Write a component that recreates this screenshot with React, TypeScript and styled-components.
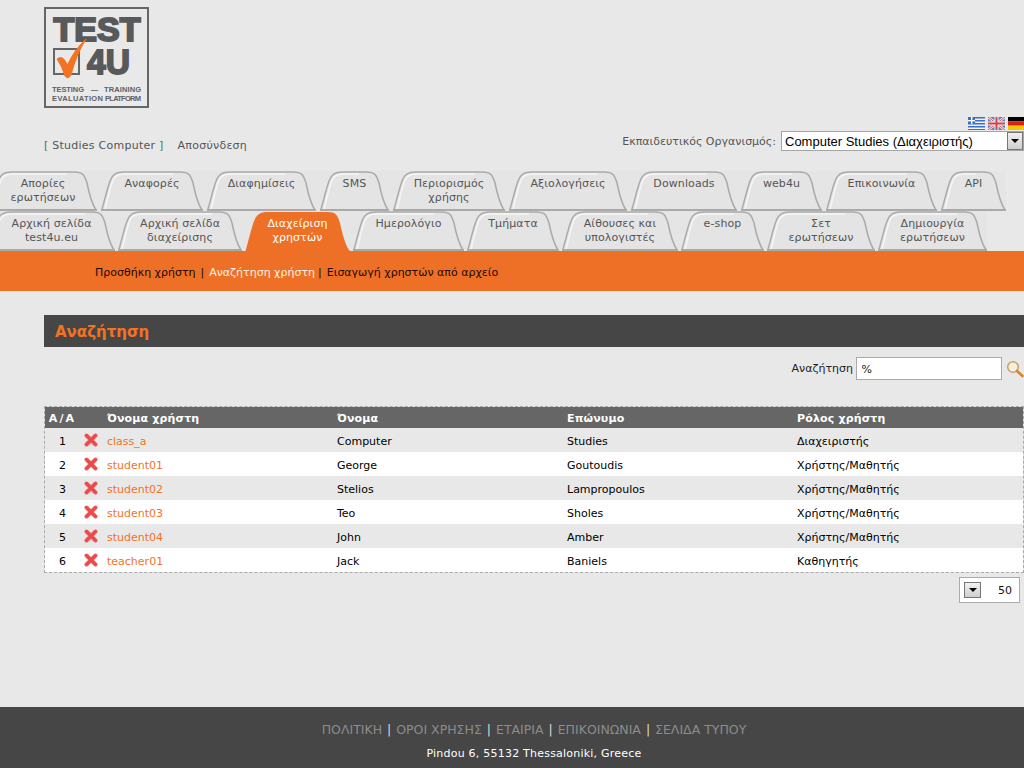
import React from "react";
import styled, { createGlobalStyle } from "styled-components";

const Global = createGlobalStyle`
  html, body { margin: 0; padding: 0; height: 768px; overflow: hidden; background: #e8e8e8; }
  body { font-family: "DejaVu Sans", Verdana, sans-serif; font-size: 11px; color: #555; }
  #root { height: 768px; }
`;

const Page = styled.div`
  height: 768px;
  display: flex;
  flex-direction: column;
  overflow: hidden;
`;
const LogoBox = styled.div`
  margin: 7px 0 0 44px;
  height: 101px;
  line-height: 0;
`;
const TopBar = styled.div`
  display: flex;
  justify-content: space-between;
  align-items: flex-end;
  padding-left: 44px;
  margin-top: 9px;
  margin-bottom: 20px;
`;
const UserBox = styled.div`
  display: flex;
  gap: 14px;
  line-height: 14px;
  color: #555;
  letter-spacing: 0.25px;
  margin-bottom: -2px;
`;
const Bracket = styled.span`
  color: #4a6a8a;
`;
const OrgBox = styled.div`
  display: flex;
  flex-direction: column;
  align-items: flex-end;
`;
const Flags = styled.div`
  display: flex;
  gap: 3px;
  height: 14px;
  line-height: 0;
`;
const OrgRow = styled.div`
  display: flex;
  align-items: center;
  gap: 5px;
  height: 20px;
`;
const FakeSelect = styled.div`
  width: 243px;
  height: 20px;
  box-sizing: border-box;
  border: 1px solid #a5a5a5;
  background: #fff;
  display: flex;
  align-items: center;
  justify-content: space-between;
  padding-left: 3px;
  font: 13px "Liberation Sans", Arial, sans-serif;
  color: #000;
`;
const ArrowButton = styled.div<{ $w: number; $h: number }>`
  width: ${(p) => p.$w}px;
  height: ${(p) => p.$h}px;
  box-sizing: border-box;
  border: 1px solid #777;
  background: linear-gradient(#f0f0f0, #cfcfcf);
  display: flex;
  align-items: center;
  justify-content: center;
  &::after {
    content: "";
    border-left: 4px solid transparent;
    border-right: 4px solid transparent;
    border-top: 4px solid #000;
  }
`;
const TabRow = styled.div<{ $left: number; $gap: number }>`
  display: flex;
  gap: ${(p) => p.$gap}px;
  margin-left: ${(p) => p.$left}px;
  height: 40px;
  width: fit-content;
  background: #e5e5e5;
`;
const TabBox = styled.div<{ $w: number; $active?: boolean }>`
  position: relative;
  width: ${(p) => p.$w}px;
  height: 40px;
  flex: none;
  box-sizing: border-box;
  padding-top: 6px;
  text-align: center;
  line-height: 14px;
  letter-spacing: 0.1px;
  color: ${(p) => (p.$active ? "#fff" : "#555")};
`;
const TabShape = styled.svg`
  position: absolute;
  left: 0;
  top: 0;
`;
const TabLabel = styled.span`
  position: relative;
  display: block;
  white-space: pre-line;
`;
const OrangeBar = styled.nav`
  height: 40px;
  box-sizing: border-box;
  padding: 3px 0 0 95px;
  background: #ee7026;
  display: flex;
  align-items: center;
  line-height: 14px;
  color: #1a0a00;
  white-space: pre;
`;
const NavActive = styled.span`
  color: #fff2e0;
  margin-right: -2px;
`;
const NavSep = styled.span`
  margin: 0 5px 0 5px;
`;
const Content = styled.main`
  margin: 24px 0 0 44px;
`;
const TitleBar = styled.h1`
  margin: 0;
  height: 32px;
  background: #464646;
  color: #f47321;
  font-size: 15px;
  font-weight: bold;
  line-height: 34px;
  padding-left: 11px;
`;
const SearchRow = styled.div`
  display: flex;
  justify-content: flex-end;
  align-items: center;
  margin-top: 10px;
  height: 23px;
  color: #222;
`;
const SearchLabel = styled.span`
  margin-right: 3px;
`;
const SearchInput = styled.div`
  width: 146px;
  height: 23px;
  box-sizing: border-box;
  border: 1px solid #aaa;
  background: #fff;
  color: #222;
  line-height: 23px;
  padding-left: 4.5px;
`;
const SearchIcon = styled.svg`
  margin-left: 4px;
  flex: none;
`;
const Table = styled.table`
  margin-top: 26px;
  width: 980px;
  box-sizing: border-box;
  table-layout: fixed;
  border-collapse: separate;
  border-spacing: 0;
  border: 1px dashed #aaa;
`;
const HeadCell = styled.th<{ $w?: number; $center?: boolean }>`
  width: ${(p) => (p.$w ? p.$w + "px" : "auto")};
  height: 21px;
  background: #666;
  color: #fff;
  font-size: 11px;
  font-weight: bold;
  letter-spacing: ${(p) => (p.$center ? 2.2 : 0.15)}px;
  text-align: ${(p) => (p.$center ? "center" : "left")};
  padding: 1px 0 0 ${(p) => (p.$center ? 0 : 4)}px;
  box-sizing: border-box;
`;
const Row = styled.tr<{ $odd: boolean }>`
  background: ${(p) => (p.$odd ? "#e8e8e8" : "#fff")};
`;
const Cell = styled.td<{ $center?: boolean }>`
  height: 24px;
  padding: 2px 0 0 ${(p) => (p.$center ? 0 : 4)}px;
  box-sizing: border-box;
  color: #000;
  text-align: ${(p) => (p.$center ? "center" : "left")};
`;
const UserLink = styled.span`
  color: #f47321;
`;
const DeleteIcon = styled.svg`
  display: block;
  margin: -2px 0 0 4px;
`;
const PagerRow = styled.div`
  display: flex;
  justify-content: flex-end;
  margin: 4px 4px 0 0;
`;
const Pager = styled.div`
  width: 61px;
  height: 26px;
  box-sizing: border-box;
  border: 1px solid #aaa;
  background: #fff;
  padding: 0 7px 0 4px;
  display: flex;
  align-items: center;
  justify-content: space-between;
  color: #111;
`;
const Footer = styled.footer`
  margin-top: auto;
  height: 61px;
  background: #464646;
  text-align: center;
  box-sizing: border-box;
  padding: 15px 0 0 44px;
  color: #fff;
`;
const FooterLinks = styled.div`
  font-size: 12.5px;
  line-height: 15px;
  white-space: pre;
`;
const FooterLink = styled.span`
  color: #8c8c8c;
`;
const FooterSep = styled.span`
  margin: 0 1px;
  color: #ddd;
`;
const Address = styled.div`
  margin-top: 9px;
  line-height: 15px;
  letter-spacing: 0.22px;
`;

const logoFont = "'Liberation Sans', sans-serif";
const Logo = () => (
  <svg width="105" height="101" viewBox="44 7 105 101">
    <rect x="45" y="8" width="103" height="99" fill="#e9e9e9" stroke="#666" strokeWidth="2" />
    <text x="53.5" y="40.5" fontFamily={logoFont} fontWeight="bold" fontSize="34" fill="#58595b" textLength="87" lengthAdjust="spacingAndGlyphs" stroke="#58595b" strokeWidth="2">TEST</text>
    <text x="87" y="73.5" fontFamily={logoFont} fontWeight="bold" fontSize="35" fill="#58595b" textLength="43" lengthAdjust="spacingAndGlyphs" stroke="#58595b" strokeWidth="1.8">4U</text>
    <rect x="54" y="49" width="25" height="25" fill="none" stroke="#666" strokeWidth="2" />
    <path d="M57 59 Q62 55 65.5 61.5 L67.5 65 Q74 50 86 39 Q76 55 71 75 Q68 80 65 76 Q62 66 57 59Z" fill="#f47321" stroke="#f47321" strokeWidth="1" strokeLinejoin="round" />
    <g fontFamily={logoFont} fontWeight="bold" fontSize="7.5" fill="#606163">
      <text x="52" y="91.5" textLength="32">TESTING</text>
      <text x="91" y="91.5" textLength="7" lengthAdjust="spacingAndGlyphs">—</text>
      <text x="104" y="91.5" textLength="37">TRAINING</text>
      <text x="52" y="100.5" textLength="51">EVALUATION</text>
      <text x="105" y="100.5" textLength="36">PLATFORM</text>
    </g>
  </svg>
);

const GreekFlag = () => (
  <svg width="17" height="13" viewBox="0 0 17 13">
    <rect width="17" height="13" fill="#3d6fc4" />
    {[1.5, 4.5, 7.5, 10.5].map((y) => (
      <rect key={y} x="0" y={y} width="17" height="1.5" fill="#eef2fa" />
    ))}
    <rect width="7" height="7" fill="#3d6fc4" />
    <rect x="3" width="1.4" height="7" fill="#fff" />
    <rect y="3" width="7" height="1.4" fill="#fff" />
  </svg>
);
const UkFlag = () => (
  <svg width="17" height="13" viewBox="0 0 17 13">
    <rect width="17" height="13" fill="#6f7fb5" />
    <path d="M0 0L17 13M17 0L0 13" stroke="#f2f2f2" strokeWidth="2.4" />
    <path d="M0 0L17 13M17 0L0 13" stroke="#cf5a6a" strokeWidth="1" />
    <path d="M8.5 0V13M0 6.5H17" stroke="#f2f2f2" strokeWidth="4" />
    <path d="M8.5 0V13M0 6.5H17" stroke="#d6404f" strokeWidth="2" />
  </svg>
);
const GermanFlag = () => (
  <svg width="16" height="13" viewBox="0 0 16 13">
    <rect width="16" height="4.4" fill="#000" />
    <rect y="4.4" width="16" height="4.3" fill="#d8201c" />
    <rect y="8.7" width="16" height="4.3" fill="#f7c600" />
  </svg>
);

const Tab = ({ w, label, active }: { w: number; label: string; active?: boolean }) => {
  const h = 40;
  const d = `M0.5 ${h} C3 ${h - 8} 6.5 ${h - 24} 9.5 ${h - 31} C12 3.5 15 1 23 1 L${w - 23} 1 C${w - 14} 1 ${w - 12.5} 4 ${w - 10} 12 C${w - 8} 22 ${w - 5} ${h - 7} ${w - 1} ${h - 1}`;
  const inner = `M4 ${h - 2} C6 ${h - 9} 9 ${h - 24} 12 ${h - 31} C14 5 17 3 23 3 L${w - 30} 3`;
  return (
    <TabBox $w={w} $active={active}>
      <TabShape width={w} height={h}>
        {active ? (
          <path d={`${d} L${w} ${h} Z`} fill="#ee7026" />
        ) : (
          <>
            <path d={`${d} L${w} ${h} Z`} fill="#e4e4e4" />
            <path d={inner} fill="none" stroke="#f6f6f6" strokeWidth="1.5" />
            <path d={d} fill="none" stroke="#aaa" strokeWidth="1.5" />
            <path d={`M0 ${h - 1} H${w}`} stroke="#aaa" strokeWidth="2" />
          </>
        )}
      </TabShape>
      <TabLabel>{label}</TabLabel>
    </TabBox>
  );
};

const row1 = [
  { w: 108, label: "Απορίες\nερωτήσεων" },
  { w: 102, label: "Αναφορές" },
  { w: 109, label: "Διαφημίσεις" },
  { w: 69, label: "SMS" },
  { w: 112, label: "Περιορισμός\nχρήσης" },
  { w: 118, label: "Αξιολογήσεις" },
  { w: 106, label: "Downloads" },
  { w: 81, label: "web4u" },
  { w: 111, label: "Επικοινωνία" },
  { w: 65, label: "API" },
];
const row2 = [
  { w: 127, label: "Αρχική σελίδα\ntest4u.eu" },
  { w: 124, label: "Αρχική σελίδα\nδιαχείρισης" },
  { w: 105, label: "Διαχείριση\nχρηστών", active: true },
  { w: 111, label: "Ημερολόγιο" },
  { w: 92, label: "Τμήματα" },
  { w: 116, label: "Αίθουσες και\nυπολογιστές" },
  { w: 83, label: "e-shop" },
  { w: 108, label: "Σετ\nερωτήσεων" },
  { w: 109, label: "Δημιουργία\nερωτήσεων" },
];
const users = [
  ["class_a", "Computer", "Studies", "Διαχειριστής"],
  ["student01", "George", "Goutoudis", "Χρήστης/Μαθητής"],
  ["student02", "Stelios", "Lampropoulos", "Χρήστης/Μαθητής"],
  ["student03", "Teo", "Sholes", "Χρήστης/Μαθητής"],
  ["student04", "John", "Amber", "Χρήστης/Μαθητής"],
  ["teacher01", "Jack", "Baniels", "Καθηγητής"],
];
const footerLinks = ["ΠΟΛΙΤΙΚΗ", "ΟΡΟΙ ΧΡΗΣΗΣ", "ΕΤΑΙΡΙΑ", "ΕΠΙΚΟΙΝΩΝΙΑ", "ΣΕΛΙΔΑ ΤΥΠΟΥ"];

export default function App() {
  return (
    <Page>
      <Global />
      <LogoBox>
        <Logo />
      </LogoBox>
      <TopBar>
        <UserBox>
          <span>
            <Bracket>[</Bracket> Studies Computer <Bracket>]</Bracket>
          </span>
          <span>Αποσύνδεση</span>
        </UserBox>
        <OrgBox>
          <Flags>
            <GreekFlag />
            <UkFlag />
            <GermanFlag />
          </Flags>
          <OrgRow>
            <span>Εκπαιδευτικός Οργανισμός:</span>
            <FakeSelect>
              Computer Studies (Διαχειριστής)
              <ArrowButton $w={16} $h={18} />
            </FakeSelect>
          </OrgRow>
        </OrgBox>
      </TopBar>
      <TabRow $left={-11} $gap={4}>
        {row1.map((t) => (
          <Tab key={t.label} {...t} />
        ))}
      </TabRow>
      <TabRow $left={-12} $gap={3}>
        {row2.map((t) => (
          <Tab key={t.label} {...t} />
        ))}
      </TabRow>
      <OrangeBar>
        <span>Προσθήκη χρήστη</span>
        <NavSep>|</NavSep>
        <NavActive>Αναζήτηση χρήστη</NavActive>
        <NavSep>|</NavSep>
        <span>Εισαγωγή χρηστών από αρχείο</span>
      </OrangeBar>
      <Content>
        <TitleBar>Αναζήτηση</TitleBar>
        <SearchRow>
          <SearchLabel>Αναζήτηση</SearchLabel>
          <SearchInput>%</SearchInput>
          <SearchIcon width="18" height="18" viewBox="0 0 18 18">
            <circle cx="7" cy="7" r="5.3" fill="#f5efe2" stroke="#c9a36a" strokeWidth="1.6" />
            <path d="M11 11L16.5 16" stroke="#d9822b" strokeWidth="2.6" strokeLinecap="round" />
          </SearchIcon>
        </SearchRow>
        <Table>
          <thead>
            <tr>
              <HeadCell $w={35} $center>A/A</HeadCell>
              <HeadCell $w={23} />
              <HeadCell $w={230}>Όνομα χρήστη</HeadCell>
              <HeadCell $w={230}>Όνομα</HeadCell>
              <HeadCell $w={230}>Επώνυμο</HeadCell>
              <HeadCell>Ρόλος χρήστη</HeadCell>
            </tr>
          </thead>
          <tbody>
            {users.map((u, i) => (
              <Row key={u[0]} $odd={i % 2 === 0}>
                <Cell $center>{i + 1}</Cell>
                <Cell $center>
                  <DeleteIcon width="14" height="14" viewBox="0 0 14 14">
                    <path d="M2.5 2.5L11.5 11.5M11.5 2.5L2.5 11.5" stroke="#e2615f" strokeWidth="4" strokeLinecap="round" />
                    <path d="M2.5 2.5L11.5 11.5M11.5 2.5L2.5 11.5" stroke="#f2454c" strokeWidth="2.2" strokeLinecap="round" />
                  </DeleteIcon>
                </Cell>
                <Cell>
                  <UserLink>{u[0]}</UserLink>
                </Cell>
                <Cell>{u[1]}</Cell>
                <Cell>{u[2]}</Cell>
                <Cell>{u[3]}</Cell>
              </Row>
            ))}
          </tbody>
        </Table>
        <PagerRow>
          <Pager>
            <ArrowButton $w={17} $h={16} />
            <span>50</span>
          </Pager>
        </PagerRow>
      </Content>
      <Footer>
        <FooterLinks>
          {footerLinks.map((l, i) => (
            <React.Fragment key={l}>
              {i > 0 && <FooterSep> | </FooterSep>}
              <FooterLink>{l}</FooterLink>
            </React.Fragment>
          ))}
        </FooterLinks>
        <Address>Pindou 6, 55132 Thessaloniki, Greece</Address>
      </Footer>
    </Page>
  );
}
